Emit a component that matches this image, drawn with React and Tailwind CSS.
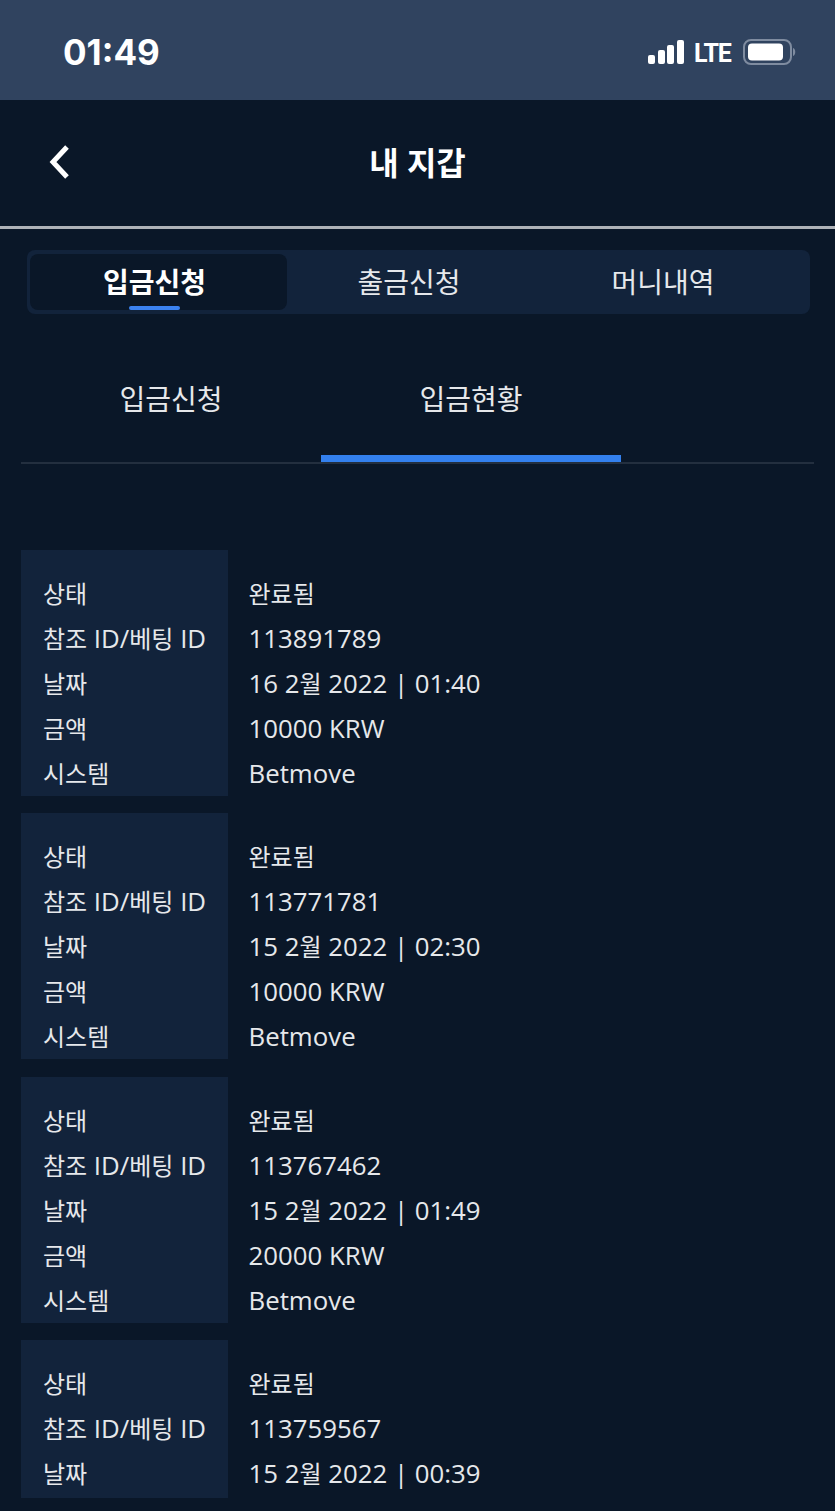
const font = { fontFamily: '"Open Sans", "Noto Sans CJK KR", sans-serif' }

const deposits = [
  { id: '113891789', date: '16 2월 2022 | 01:40', amount: '10000 KRW' },
  { id: '113771781', date: '15 2월 2022 | 02:30', amount: '10000 KRW' },
  { id: '113767462', date: '15 2월 2022 | 01:49', amount: '20000 KRW' },
  { id: '113759567', date: '15 2월 2022 | 00:39', amount: null },
]

// Hangul runs narrower than the latin text on the same line
function Mixed({ text }) {
  return text.split(/([가-힣]+)/).map((part, i) =>
    /[가-힣]/.test(part) ? <span key={i} className="text-[24px]">{part}</span> : part
  )
}

function StatusBar() {
  return (
    <div className="h-[100px] bg-[#30435f] flex items-center justify-between pl-[63px] pr-[38px] pt-[4px]">
      <span className="text-white text-[35px] font-bold font-['Inter','Liberation_Sans',sans-serif]">01:49</span>
      <div className="flex items-center mb-[1px]">
        <svg width="37" height="24" viewBox="0 0 37 24" fill="white">
          <rect x="0" y="15" width="7" height="9" rx="2" />
          <rect x="10" y="10" width="7" height="14" rx="2" />
          <rect x="19" y="5" width="7" height="19" rx="2" />
          <rect x="29" y="0" width="7" height="24" rx="2" />
        </svg>
        <span className="ml-[9px] mt-[3px] w-[38px] text-white text-[25px] font-bold leading-none tracking-[-1.200px] font-['Roboto',sans-serif]">LTE</span>
        <svg className="ml-[11px]" width="54" height="26" viewBox="0 0 54 26" fill="none">
          <rect x="1" y="1" width="47" height="24" rx="7" stroke="#7f8ca0" strokeWidth="2" />
          <rect x="5" y="4.500" width="35" height="17" rx="4" fill="white" />
          <path d="M50 9c3 1 3 7 0 8z" fill="#7f8ca0" />
        </svg>
      </div>
    </div>
  )
}

function Header() {
  return (
    <div className="h-[129px] relative flex items-center justify-center border-b-[3px] border-[#aeb2b8]">
      <svg className="absolute left-[46px] top-[44px]" width="26" height="36" viewBox="0 0 26 36" fill="none">
        <path d="M21 3 L7 18 L21 33" stroke="white" strokeWidth="5" />
      </svg>
      <span className="text-white text-[32px] font-bold" style={font}>내 지갑</span>
    </div>
  )
}

function MainTabs() {
  return (
    <div className="mt-[21px] mx-[27px] w-[783px] h-[64px] rounded-lg bg-[#12233b] flex px-[3px] py-[4px]">
      <div className="relative w-[257px] rounded-lg bg-[#0a1728] flex items-center justify-center pr-[8px]">
        <span className="text-white text-[28px] font-bold" style={font}>입금신청</span>
        <div className="absolute bottom-0 left-[99px] w-[51px] h-[4px] rounded-sm bg-[#3b82f0]" />
      </div>
      <div className="w-[244px] flex items-center justify-center">
        <span className="text-[#e6e8eb] text-[28px]" style={font}>출금신청</span>
      </div>
      <div className="w-[264px] flex items-center justify-center">
        <span className="text-[#e6e8eb] text-[28px]" style={font}>머니내역</span>
      </div>
    </div>
  )
}

function SubTabs() {
  return (
    <div className="mt-[26px] mx-[21px] w-[793px] h-[124px] flex border-b-2 border-[#232f3f]">
      <div className="w-[300px] flex items-center justify-center pb-[5px]">
        <span className="text-[#e6e8eb] text-[28px]" style={font}>입금신청</span>
      </div>
      <div className="w-[300px] flex items-center justify-center border-b-[7px] border-[#3380ee]">
        <span className="text-[#e6e8eb] text-[28px] mt-[2px]" style={font}>입금현황</span>
      </div>
    </div>
  )
}

function Row({ label, value }) {
  return (
    <div className="flex h-[45px] items-center text-[25.800px] text-[#e6e8eb] whitespace-nowrap" style={font}>
      <div className="w-[207px] pl-[22px]"><Mixed text={label} /></div>
      <div className="pl-[20.500px]"><Mixed text={value} /></div>
    </div>
  )
}

function DepositCard({ item }) {
  return (
    <div className={item.amount ? 'relative pt-[21px]' : 'relative pt-[21px] pb-[2.500px]'}>
      <div className="absolute left-0 top-0 bottom-0 w-[207px] bg-[#12233b]" />
      <div className="relative">
        <Row label="상태" value="완료됨" />
        <Row label="참조 ID/베팅 ID" value={item.id} />
        <Row label="날짜" value={item.date} />
        {item.amount && <Row label="금액" value={item.amount} />}
        {item.amount && <Row label="시스템" value="Betmove" />}
      </div>
    </div>
  )
}

export default function App() {
  return (
    <div className="w-[835px] h-[1511px] overflow-hidden bg-[#0a1728]">
      <StatusBar />
      <Header />
      <MainTabs />
      <SubTabs />
      <div className="mt-[86px] mx-[21px] flex flex-col gap-[17.330px]">
        {deposits.map(item => (
          <DepositCard key={item.id} item={item} />
        ))}
      </div>
    </div>
  )
}
